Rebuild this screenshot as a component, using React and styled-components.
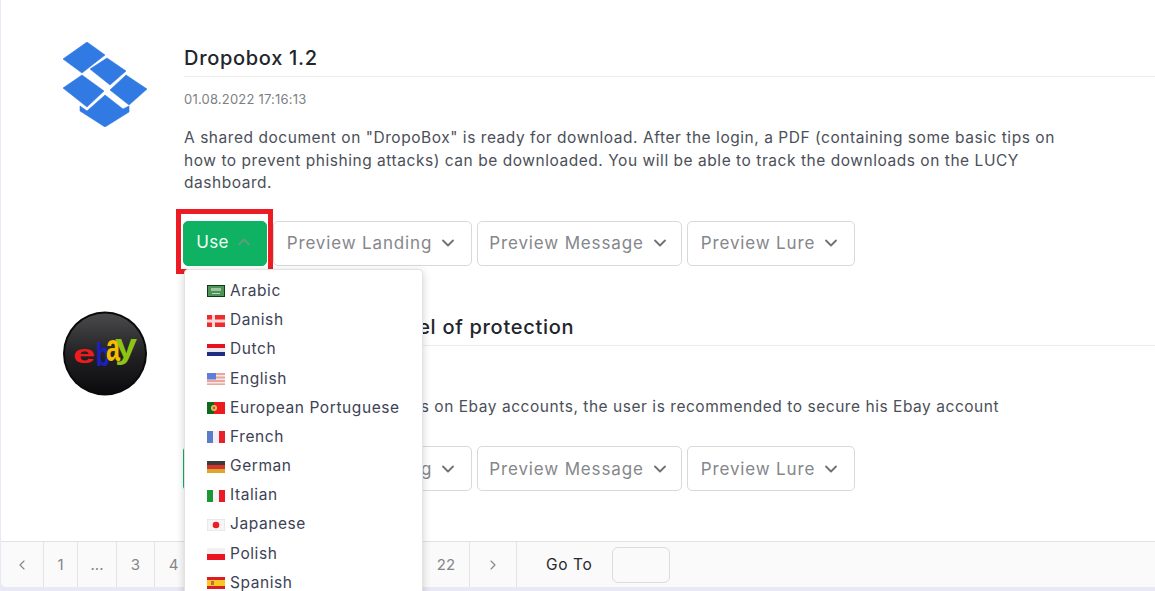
import React from 'react';
import styled, { createGlobalStyle } from 'styled-components';
import { ChevronDown, ChevronUp, ChevronLeft, ChevronRight } from 'lucide-react';

const Global = createGlobalStyle`
  html, body { margin: 0; padding: 0; background: #eeeef7; }
  * { box-sizing: border-box; }
`;

const Page = styled.div`
  width: 1155px;
  height: 591px;
  overflow: hidden;
  display: flex;
  flex-direction: column;
  padding: 0 0 4px 1px;
  font-family: Inter, "Noto Sans", sans-serif;
  background: #e9e9f6;
`;

const List = styled.div`
  flex: 1;
  background: #fff;
  padding-top: 40px;
  display: flex;
  flex-direction: column;
  gap: 43px;
`;

const Card = styled.div`
  display: grid;
  grid-template-columns: 84px 1fr;
  column-gap: 37px;
  padding-left: 62px;
`;

const Logo = styled.svg`
  width: 84px;
  height: 85px;
  display: block;
  margin-top: 2px;
`;

const Title = styled.h2`
  margin: 0;
  height: 37px;
  padding-top: 4px;
  font-size: 20px;
  line-height: 28px;
  font-weight: 500;
  color: #22252b;
  letter-spacing: 0.7px;
  border-bottom: 1px solid #ececec;
  white-space: nowrap;
`;

const Date = styled.div`
  margin-top: 12px;
  font-size: 13px;
  line-height: 20px;
  color: #7d7f84;
  letter-spacing: 0.2px;
`;

const Desc = styled.p`
  margin: 18px 0 0;
  max-width: 880px;
  font-size: 15.5px;
  line-height: 22.5px;
  color: #4b4f58;
  letter-spacing: 0.54px;
`;

const Actions = styled.div`
  margin-top: ${p => p.$top}px;
  display: flex;
  gap: 5px;
  margin-left: -1px;
`;

const UseWrap = styled.div`
  position: relative;
  margin-right: 1px;
`;

const UseButton = styled.button`
  height: 45px;
  width: 84px;
  display: flex;
  align-items: center;
  justify-content: center;
  gap: 5px;
  padding: 0 0 3px;
  border: 1px solid #0fb263;
  border-radius: 5px;
  background: #0fb263;
  color: #f4fff9;
  font: inherit;
  font-size: 17px;
  letter-spacing: 0.4px;
`;

const Highlight = styled.div`
  position: absolute;
  left: -7px;
  top: -12px;
  width: 97px;
  height: 65px;
  border: 5px solid #ed1c24;
  pointer-events: none;
`;

const Preview = styled.button`
  height: 45px;
  width: ${p => p.$w}px;
  display: flex;
  align-items: center;
  justify-content: center;
  gap: 6px;
  padding: 0;
  border: 1px solid #d9d9d9;
  border-radius: 5px;
  background: #fff;
  color: #85878b;
  font: inherit;
  font-size: 17px;
  letter-spacing: 0.85px;
`;

const Menu = styled.div`
  position: absolute;
  z-index: 5;
  left: 1px;
  top: 48px;
  width: 239px;
  padding: 6.4px 0 8px 22px;
  background: #fff;
  border: 1px solid #e3e3e3;
  border-radius: 4px;
  box-shadow: 0 2px 8px rgba(0, 0, 0, 0.18);
`;

const MenuItem = styled.div`
  height: 29.2px;
  display: flex;
  align-items: center;
  gap: 5px;
  font-size: 15.5px;
  letter-spacing: 0.58px;
  color: #3d4254;
  white-space: nowrap;
`;

const FlagBox = styled.svg`
  width: 18px;
  height: 12px;
  flex: none;
  display: block;
  margin-top: 2px;
`;

const Pager = styled.div`
  height: 46px;
  flex: none;
  display: flex;
  background: #fafafa;
  border-top: 1px solid #e2e2e2;
  border-bottom-left-radius: 5px;
`;

const Cell = styled.div`
  width: ${p => p.$w}px;
  flex: none;
  display: flex;
  align-items: center;
  justify-content: center;
  border-right: 1px solid #e4e4e4;
  color: #84868a;
  font-size: 15px;
`;

const GoTo = styled.div`
  display: flex;
  align-items: center;
  margin-left: 29px;
  gap: 20px;
  font-size: 15.5px;
  color: #26282c;
  letter-spacing: 0.6px;
`;

const GoInput = styled.div`
  width: 58px;
  height: 36px;
  background: #fafafa;
  border: 1px solid #dcdcdc;
  border-radius: 6px;
`;

const flagParts = {
  Arabic: (
    <>
      <rect width="18" height="12" fill="#0d3d12" />
      <rect x="1" y="1" width="16" height="10" fill="#4f9358" />
      <rect x="4" y="3" width="10" height="3" fill="#9cc5a0" />
      <rect x="5" y="8" width="8" height="1" fill="#b9d5bb" />
    </>
  ),
  Danish: (
    <>
      <rect width="18" height="12" fill="#ef2b2d" />
      <rect y="4.5" width="18" height="3" fill="#f4d9d9" />
      <rect x="5" width="3" height="12" fill="#f4d9d9" />
    </>
  ),
  Dutch: (
    <>
      <rect width="18" height="4" fill="#e8121c" />
      <rect y="4" width="18" height="4" fill="#ece9f0" />
      <rect y="8" width="18" height="4" fill="#1d2d80" />
    </>
  ),
  English: (
    <>
      <rect width="18" height="12" fill="#e9a69f" />
      <rect y="2" width="18" height="1.5" fill="#f6e7e5" />
      <rect y="5.5" width="18" height="1.5" fill="#f6e7e5" />
      <rect y="9" width="18" height="1.5" fill="#f6e7e5" />
      <rect width="9" height="6.5" fill="#5f7ed6" />
    </>
  ),
  'European Portuguese': (
    <>
      <rect width="18" height="12" fill="#ec1c1c" />
      <rect width="7" height="12" fill="#0c6b1e" />
      <circle cx="7" cy="6" r="3" fill="#e9c75a" />
      <circle cx="7" cy="6" r="1.4" fill="#d9534f" />
    </>
  ),
  French: (
    <>
      <rect width="6" height="12" fill="#5b7cc9" />
      <rect x="6" width="6" height="12" fill="#f1f1f5" />
      <rect x="12" width="6" height="12" fill="#e8212b" />
    </>
  ),
  German: (
    <>
      <rect width="18" height="4" fill="#3b3b3b" />
      <rect y="4" width="18" height="4" fill="#d8322a" />
      <rect y="8" width="18" height="4" fill="#d9a92f" />
    </>
  ),
  Italian: (
    <>
      <rect width="6" height="12" fill="#1e9636" />
      <rect x="6" width="6" height="12" fill="#f4f4f4" />
      <rect x="12" width="6" height="12" fill="#ec1a24" />
    </>
  ),
  Japanese: (
    <>
      <rect width="18" height="12" fill="#f5f5f5" stroke="#dddddd" />
      <circle cx="9" cy="6" r="3.3" fill="#ec1c24" />
    </>
  ),
  Polish: (
    <>
      <rect width="18" height="6" fill="#f1f1f1" />
      <rect y="6" width="18" height="6" fill="#ea1420" />
    </>
  ),
  Spanish: (
    <>
      <rect width="18" height="12" fill="#dc1c22" />
      <rect y="3" width="18" height="6" fill="#f5c924" />
      <rect x="4" y="4" width="3" height="4" fill="#c9654a" />
    </>
  ),
};

const languages = Object.keys(flagParts);

function DropboxLogo() {
  return (
    <Logo viewBox="63 42 84 85">
      <g fill="#317ae4" stroke="#317ae4" strokeWidth="0.6" strokeLinejoin="round">
        <polygon points="63,59 87,42 105,55 82,73" />
        <polygon points="90,69 107,58 126,71 110,85" />
        <polygon points="63,88 82,75 104,91 87,107" />
        <polygon points="110,90 126,75 147,89 129,105" />
        <polygon points="80,106 87,111 105,95 123,109 129,106 129,112 105,127 80,111" />
      </g>
    </Logo>
  );
}

function EbayLogo() {
  return (
    <Logo viewBox="0 0 84 85">
      <defs>
        <linearGradient id="ebayBg" x1="0" y1="0" x2="0" y2="1">
          <stop offset="0" stopColor="#4a4a4c" />
          <stop offset="0.5" stopColor="#232325" />
          <stop offset="1" stopColor="#0b0b0d" />
        </linearGradient>
      </defs>
      <circle cx="42" cy="42.5" r="42" fill="#0a0a0a" />
      <circle cx="42" cy="42.5" r="40" fill="url(#ebayBg)" />
      <g fontFamily="Liberation Sans, sans-serif" fontWeight="700">
        <text x="10" y="52" fontSize="26" textLength="22" lengthAdjust="spacingAndGlyphs" fill="#ee1c1c">e</text>
        <text x="33" y="55" fontSize="34" textLength="14" lengthAdjust="spacingAndGlyphs" fill="#1c20c4">b</text>
        <text x="43" y="50" fontSize="38" textLength="14" lengthAdjust="spacingAndGlyphs" fill="#f6bc00">a</text>
        <text x="52" y="47" fontSize="35" textLength="22" lengthAdjust="spacingAndGlyphs" fill="#8cc414">y</text>
      </g>
    </Logo>
  );
}

function Item({ logo, title, date, text, open }) {
  return (
    <Card>
      {logo}
      <div>
        <Title>{title}</Title>
        <Date>{date}</Date>
        <Desc>{text}</Desc>
        <Actions $top={open ? 26 : 28}>
          <UseWrap>
            <UseButton>
              Use <ChevronUp size={20} color="#5f9c7c" strokeWidth={2.2} />
            </UseButton>
            {open && (
              <>
                <Highlight />
                <Menu>
                  {languages.map(l => (
                    <MenuItem key={l}>
                      <FlagBox viewBox="0 0 18 12">{flagParts[l]}</FlagBox>
                      {l}
                    </MenuItem>
                  ))}
                </Menu>
              </>
            )}
          </UseWrap>
          <Preview $w={199}>Preview Landing <ChevronDown size={20} color="#6f7175" strokeWidth={2.2} /></Preview>
          <Preview $w={205}>Preview Message <ChevronDown size={20} color="#6f7175" strokeWidth={2.2} /></Preview>
          <Preview $w={168}>Preview Lure <ChevronDown size={20} color="#6f7175" strokeWidth={2.2} /></Preview>
        </Actions>
      </div>
    </Card>
  );
}

export default function App() {
  return (
    <Page>
      <Global />
      <List>
        <Item
          open
          logo={<DropboxLogo />}
          title="Dropobox 1.2"
          date="01.08.2022 17:16:13"
          text={'A shared document on "DropoBox" is ready for download. After the login, a PDF (containing some basic tips on how to prevent phishing attacks) can be downloaded. You will be able to track the downloads on the LUCY dashboard.'}
        />
        <Item
          logo={<EbayLogo />}
          title="Ebay - Increase the level of protection"
          date="01.08.2022 17:16:13"
          text="Due to several phishing attacks on Ebay accounts, the user is recommended to secure his Ebay account"
        />
      </List>
      <Pager>
        <Cell $w={43}><ChevronLeft size={16} strokeWidth={1.6} /></Cell>
        <Cell $w={34}>1</Cell>
        <Cell $w={39}>...</Cell>
        <Cell $w={38}>3</Cell>
        <Cell $w={38}>4</Cell>
        <Cell $w={38}>5</Cell>
        <Cell $w={38}>6</Cell>
        <Cell $w={38}>7</Cell>
        <Cell $w={38}>8</Cell>
        <Cell $w={38}>9</Cell>
        <Cell $w={40}>10</Cell>
        <Cell $w={47}>22</Cell>
        <Cell $w={47}><ChevronRight size={16} strokeWidth={1.6} /></Cell>
        <GoTo>
          Go To
          <GoInput />
        </GoTo>
      </Pager>
    </Page>
  );
}
